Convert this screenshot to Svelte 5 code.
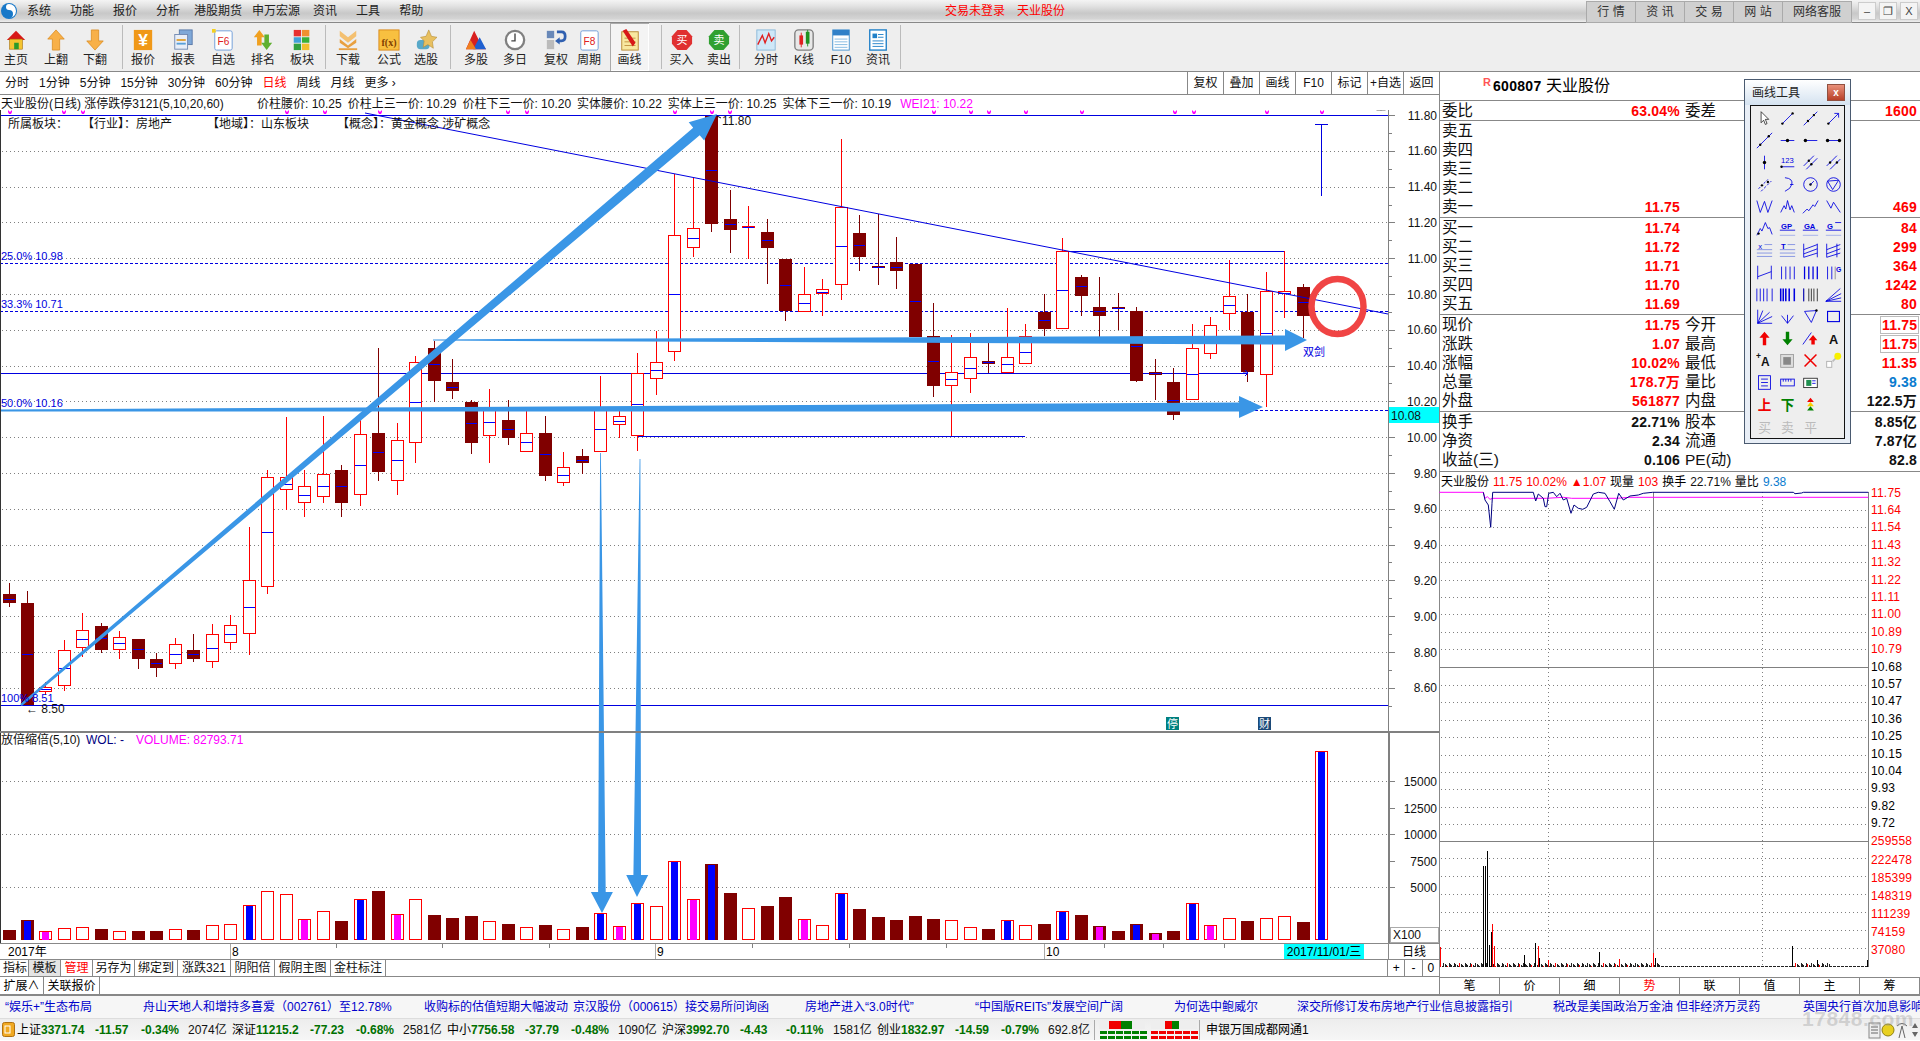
<script>
  // page coordinates are used directly inside the main chart svg (viewBox starts at 0 110)
  const H = (z) => z / 3 + 400;

  const firstCandles = [
    [1, 548, 582, 608, 620, 598], [1, 573, 609, 915, 915, 763], [0, 845, 862, 875, 885, 868], [0, 720, 751, 859, 872, 805],
    [0, 640, 691, 745, 770, 718], [1, 669, 678, 749, 758, 714], [0, 693, 712, 751, 776, 730], [1, 717, 717, 776, 806, 748],
    [1, 760, 777, 803, 830, 790], [0, 714, 733, 793, 806, 763], [1, 702, 750, 776, 785, 763], [0, 672, 703, 787, 803, 745],
    [0, 645, 676, 730, 750, 703], [0, 381, 541, 703, 764, 622], [0, 210, 232, 562, 581, 397], [0, 51, 232, 271, 331, 253],
    [0, 210, 259, 310, 351, 286], [0, 48, 223, 292, 308, 259], [1, 195, 210, 308, 350, 259], [0, 60, 103, 286, 317, 196],
    [1, -156, 99, 215, 242, 157], [0, 69, 121, 244, 284, 181], [0, -132, -115, 130, 188, 7], [1, -178, -156, -58, 6, -107],
    [1, -123, -54, -28, -3, -39], [1, 0, 6, 128, 161, 70], [0, -33, 21, 109, 188, 67], [1, 0, 60, 113, 135, 88],
    [0, 20, 100, 155, 155, 127], [1, 48, 99, 227, 243, 163], [0, 156, 202, 250, 258, 226], [1, 147, 168, 188, 222, 181],
    [0, -72, 21, 155, 155, 88], [0, 20, 49, 76, 113, 64], [0, -141, -82, 109, 152, 12], [0, -207, -115, -62, -16, -90]
  ].map(([d, ...v]) => [d, ...v.map(H)]);

  const lastCandles = [
    [0, 174, 235, 352, 361, 294], [0, 178, 228, 248, 257, 238], [1, 116, 116, 224, 232, 170], [1, 190, 219, 230, 253, 224],
    [0, 206, 226, 228, 259, 227], [1, 219, 232, 248, 284, 240], [1, 259, 259, 311, 321, 285], [0, 267, 294, 312, 312, 303],
    [0, 279, 289, 294, 316, 292], [0, 139, 207, 285, 300, 246], [1, 215, 233, 257, 271, 245], [1, 214, 266, 268, 285, 267],
    [1, 237, 262, 271, 289, 267], [1, 264, 264, 337, 337, 301], [1, 303, 336, 386, 397, 361], [0, 335, 372, 386, 436, 379],
    [0, 333, 357, 379, 393, 368], [1, 343, 361, 364, 373, 362], [0, 308, 357, 373, 373, 364], [0, 324, 336, 364, 364, 352],
    [1, 294, 312, 329, 336, 320], [0, 238, 251, 329, 329, 290], [1, 275, 277, 296, 316, 286], [1, 277, 307, 316, 340, 311],
    [1, 293, 307, 309, 330, 308], [1, 307, 311, 381, 382, 346], [1, 359, 372, 375, 400, 373], [1, 368, 382, 415, 420, 400],
    [0, 324, 348, 400, 400, 374], [0, 317, 325, 354, 359, 340], [0, 260, 296, 314, 330, 305], [1, 294, 312, 372, 382, 341],
    [0, 272, 291, 375, 407, 333], [0, 251, 291, 294, 318, 293], [1, 284, 287, 316, 338, 302]
  ];

  const cx = (i) => Math.round(8.5 + 18.49 * i);
  const candles = [...firstCandles, ...lastCandles].map(([down, hi, top, bot, lo, mid], i) => ({
    x: cx(i), down, hi: Math.round(hi), top: Math.round(top), bot: Math.round(bot), lo: Math.round(lo), mid: Math.round(mid)
  }));

  const volumes = [
    [630,'d'],[600,'d','b'],[634,'u','m'],[625,'u'],[622,'u'],[627,'d'],[634,'u'],[633,'d'],[633,'d'],[628,'u'],[630,'d'],[616,'u'],
    [613,'u'],[556,'u','b'],[514,'u'],[523,'u'],[598,'u','m'],[574,'u'],[603,'d'],[538,'u','b'],[513,'d'],[583,'u','m'],[538,'u'],[585,'d'],
    [594,'d'],[588,'d'],[604,'u'],[612,'d'],[622,'u'],[615,'d'],[628,'u'],[621,'d'],[580,'u','b'],[619,'u','m'],[550,'u','b'],[559,'u'],
    [424,'u','b'],[538,'u','m'],[432,'d','b'],[519,'d'],[565,'u'],[558,'d'],[531,'d'],[598,'u','m'],[616,'u'],[520,'u','b'],[567,'d'],[591,'d'],
    [600,'d'],[588,'d'],[597,'d'],[601,'u'],[622,'u'],[627,'d'],[601,'u','b'],[616,'u'],[612,'d'],[574,'u','b'],[585,'d'],[618,'d','m'],
    [633,'d'],[612,'d','b'],[639,'d','m'],[633,'d'],[550,'u','b'],[616,'u','m'],[595,'u'],[603,'d'],[595,'u'],[589,'u'],[606,'d'],[94,'u','b']
  ].map(([z, kind, over], i) => ({ x: cx(i), top: Math.round(z / 3 + 720), kind, over }));

  const priceLabels = Array.from({ length: 17 }, (_, i) => ({ y: 115 + i * 35.8, text: (11.8 - i * 0.2).toFixed(2) }));
  const priceGrid = priceLabels.map((l) => Math.round(l.y)).filter((y) => y !== 115);
  const volLabels = [[781, '15000'], [808, '12500'], [834, '10000'], [861, '7500'], [887, '5000']];
  const markers = [10, 64, 83, 287, 325, 380, 508, 527, 675, 712, 730, 934, 971, 989, 1026, 1082, 1175, 1194, 1267, 1322];

  function arrow(x0, y0, x1, y1, w0, w1, headLen, headHalf) {
    const len = Math.hypot(x1 - x0, y1 - y0);
    const ux = (x1 - x0) / len, uy = (y1 - y0) / len;
    const px = -uy, py = ux;
    const bx = x1 - ux * headLen, by = y1 - uy * headLen;
    const pts = [
      [x0 + px * w0, y0 + py * w0], [bx + px * w1, by + py * w1], [bx + px * headHalf, by + py * headHalf], [x1, y1],
      [bx - px * headHalf, by - py * headHalf], [bx - px * w1, by - py * w1], [x0 - px * w0, y0 - py * w0]
    ];
    return pts.map((p) => p[0].toFixed(1) + ',' + p[1].toFixed(1)).join(' ');
  }
  const arrows = [
    arrow(21, 705, 717, 114, 1.2, 5, 27, 12),
    arrow(433, 340, 1307, 340, 0.6, 4.5, 22, 11),
    arrow(0, 410.5, 1263, 407, 1, 4.5, 24, 11),
    arrow(600.5, 453, 602, 913, 0.4, 3.8, 21, 11),
    arrow(640, 459, 637, 897, 0.4, 3.8, 22, 11)
  ];

  const toolbar = [
    { w: 32, label: '主页', icon: '<path d="M12 2 22 12H2z" fill="#d81818"/><rect x="5" y="11" width="14" height="11" fill="#f4c430" stroke="#a06800" stroke-width=".6"/><rect x="10" y="15" width="5" height="7" fill="#2a9a2a"/>' },
    { w: 48, label: '上翻', icon: '<path d="M12 1 21 11H16V23H8V11H3z" fill="#f8b048" stroke="#d88818" stroke-width=".8"/>' },
    { w: 30, label: '下翻', icon: '<path d="M12 23 21 13H16V1H8V13H3z" fill="#f8b048" stroke="#d88818" stroke-width=".8"/>' },
    { sep: 12 },
    { w: 36, label: '报价', icon: '<rect x="2" y="1" width="20" height="22" fill="#f09818"/><text x="12" y="19" text-anchor="middle" font-size="19" font-weight="700" fill="#fff" font-family="Liberation Sans">¥</text>' },
    { w: 44, label: '报表', icon: '<rect x="8" y="1" width="14" height="16" fill="#7fa8d8" stroke="#5878a8"/><rect x="3" y="6" width="14" height="16" fill="#e8eef8" stroke="#7088b0"/><rect x="5" y="11" width="10" height="2" fill="#e0a030"/><rect x="5" y="15" width="10" height="2" fill="#58a0d8"/>' },
    { w: 36, label: '自选', icon: '<rect x="3" y="2" width="19" height="21" rx="2" fill="#fff" stroke="#6b9ad8"/><rect x="0" y="0" width="4" height="4" fill="#f4d020"/><text x="12.5" y="17" text-anchor="middle" font-size="11" fill="#e02020" font-family="Liberation Sans">F6</text>' },
    { w: 44, label: '排名', icon: '<path d="M8 1 14 9H10.5V18H5.5V9H2z" fill="#f0a020"/><path d="M16 23 22 15H18.5V6H13.500V15H10z" fill="#60b030"/>' },
    { w: 34, label: '板块', icon: '<rect x="3" y="1" width="8" height="7" fill="#e83030"/><rect x="12" y="1" width="8" height="7" fill="#f09030"/><rect x="3" y="9" width="8" height="6" fill="#40a0d8"/><rect x="12" y="9" width="8" height="6" fill="#38b038"/><rect x="3" y="16" width="8" height="7" fill="#30a040"/><rect x="12" y="16" width="8" height="7" fill="#f0c030"/>' },
    { sep: 6 },
    { w: 40, label: '下载', icon: '<path d="M3 2 12 9 21 2V8L12 15 3 8z" fill="#f4c070"/><path d="M3 11 12 18 21 11V15L12 21 3 15z" fill="#e8a040"/><rect x="2" y="21" width="20" height="2" fill="#e8a040"/>' },
    { w: 42, label: '公式', icon: '<rect x="1" y="1" width="22" height="22" fill="#f8c040" stroke="#d88818"/><text x="12" y="18" text-anchor="middle" font-size="11" font-weight="700" fill="#804000" font-family="Liberation Serif">f(x)</text>' },
    { w: 32, label: '选股', icon: '<rect x="2" y="12" width="14" height="10" rx="4" fill="#58a8c8"/><path d="M15 1 18 8 24 9 19 14 20 21 14 17 9 20 10 13 6 9 12 8z" fill="#e8c060" stroke="#b08830" stroke-width=".6"/>' },
    { sep: 8 },
    { w: 46, label: '多股', icon: '<path d="M1 22 10 2 16 14 23 22z" fill="#d82020"/><path d="M9 22 16 9 23 22z" fill="#2060d0"/><path d="M1 22 6 12 12 22z" fill="#f08020"/>' },
    { w: 32, label: '多日', icon: '<circle cx="12" cy="12" r="10" fill="#fff" stroke="#808080" stroke-width="2.500"/><path d="M12 5V13H8" fill="none" stroke="#444" stroke-width="1.500"/>' },
    { w: 50, label: '复权', icon: '<rect x="2" y="2" width="8" height="8" fill="#6888b8"/><rect x="2" y="12" width="8" height="10" fill="#bbb"/><path d="M13 3H18Q22 3 22 8T18 13H15" fill="none" stroke="#3060b0" stroke-width="3"/><path d="M16 9 11 13 16 17z" fill="#3060b0"/>' },
    { w: 16, label: '周期', icon: '<rect x="3" y="2" width="19" height="21" rx="2" fill="#fff" stroke="#6b9ad8"/><text x="12.5" y="17" text-anchor="middle" font-size="11" fill="#e02020" font-family="Liberation Sans">F8</text>' },
    { space: 13 },
    { w: 39, label: '画线', active: true, icon: '<rect x="3" y="3" width="18" height="20" fill="#f8e8a0" stroke="#b88830"/><path d="M6 10H18M6 14H18M6 18H18" stroke="#c09040"/><path d="M4 2 8 0 18 15 15 19z" fill="#d81818"/>' },
    { sep: 12 },
    { w: 35, label: '买入', icon: '<path d="M7 1H17L23 8V16L17 23H7L1 16V8z" fill="#e03030"/><text x="12" y="16.500" text-anchor="middle" font-size="12" fill="#fff" font-family="Noto Sans CJK SC">买</text>' },
    { w: 40, label: '卖出', icon: '<path d="M7 1H17L23 8V16L17 23H7L1 16V8z" fill="#30a030"/><text x="12" y="16.500" text-anchor="middle" font-size="12" fill="#fff" font-family="Noto Sans CJK SC">卖</text>' },
    { sep: 0 },
    { w: 48, label: '分时', icon: '<rect x="2" y="1" width="20" height="22" fill="#cfe8f8" stroke="#88b8d8"/><path d="M3 17 8 7 11 15 15 5 18 13 21 9" fill="none" stroke="#e02020" stroke-width="1.500"/>' },
    { w: 28, label: 'K线', icon: '<rect x="2" y="1" width="20" height="22" rx="4" fill="#e8e8e8" stroke="#808080" stroke-width="1.500"/><rect x="7" y="7" width="4" height="10" fill="#e02020"/><path d="M9 4V20" stroke="#e02020"/><rect x="14" y="3" width="4" height="13" fill="#209020"/><path d="M16 1V19" stroke="#209020"/>' },
    { w: 46, label: 'F10', icon: '<rect x="3" y="1" width="18" height="22" fill="#fff" stroke="#4090d0"/><rect x="3" y="1" width="18" height="6" fill="#3080c8"/><path d="M5 11H19M5 14H19M5 17H19M5 20H19" stroke="#80b8e0"/>' },
    { w: 28, label: '资讯', icon: '<rect x="3" y="1" width="18" height="22" fill="#fff" stroke="#2080c8" stroke-width="1.500"/><rect x="6" y="5" width="5" height="5" fill="#2080c8"/><path d="M12 6H18M12 9H18M6 13H18M6 16H18M6 19H18" stroke="#2080c8"/>' },
    { sep: 8 }
  ];

  const menu = [['系统', 27], ['功能', 19], ['报价', 19], ['分析', 19], ['港股期货', 14], ['申万宏源', 10], ['资讯', 13], ['工具', 19], ['帮助', 19]];
  const periods = ['分时', '1分钟', '5分钟', '15分钟', '30分钟', '60分钟', '日线', '周线', '月线', '更多 ›'];
  const chartBtns = ['复权', '叠加', '画线', 'F10', '标记', '+自选', '返回'];
  const infoItems = ['价柱腰价: 10.25', '价柱上三一价: 10.29', '价柱下三一价: 10.20', '实体腰价: 10.22', '实体上三一价: 10.25', '实体下三一价: 10.19'];
  const bottomTabs = [['指标', 27], ['模板', 32], ['管理', 32], ['另存为', 42], ['绑定到', 43], ['涨跌321', 53], ['阴阳倍', 44], ['假阴主图', 56], ['金柱标注', 55]];
  const minorTicks = [336, 442, 549, 752, 849, 946, 1104, 1163, 1224];

  const sellRows = [['卖五'], ['卖四'], ['卖三'], ['卖二'], ['卖一', '11.75', '469']];
  const buyRows = [['买一', '11.74', '84'], ['买二', '11.72', '299'], ['买三', '11.71', '364'], ['买四', '11.70', '1242'], ['买五', '11.69', '80']];
  const statRows = [
    ['现价', '11.75', '今开', '11.75', 'boxed'], ['涨跌', '1.07', '最高', '11.75', 'boxed'], ['涨幅', '10.02%', '最低', '11.35', ''],
    ['总量', '178.7万', '量比', '9.38', 'blue'], ['外盘', '561877', '内盘', '122.5万', 'black']
  ];
  const fundRows = [['换手', '22.71%', '股本', '8.85亿'], ['净资', '2.34', '流通', '7.87亿'], ['收益(三)', '0.106', 'PE(动)', '82.8']];

  // intraday panel, points read at 3x of the crop starting at 1430,470
  const ix = (z) => z / 3 + 1430;
  const iy = (z) => z / 3 + 470;
  const pts = (list) => list.map(([x, y]) => ix(x).toFixed(1) + ',' + iy(y).toFixed(1)).join(' ');
  const navy = pts([[160,67],[165,90],[175,105],[182,172],[186,100],[188,67],[310,67],[317,93],[325,72],[340,85],[345,110],[350,110],[356,70],[370,67],[380,80],[390,70],[400,90],[410,85],[423,130],[432,105],[445,115],[458,118],[470,112],[490,72],[505,67],[525,70],[540,95],[553,118],[566,70],[580,90],[600,78],[625,75],[640,70],[668,67],[1090,67],[1095,71],[1115,69],[1120,67],[1315,67]]);
  const pink = pts([[28,67],[160,67],[165,85],[172,80],[180,88],[188,85],[300,85],[350,85],[400,82],[425,85],[520,85],[560,85],[600,82],[1315,82]]);
  const minuteLabels = [[67,'11.75',1],[118,'11.64',1],[170,'11.54',1],[224,'11.43',1],[275,'11.32',1],[329,'11.22',1],[380,'11.11',1],[431,'11.00',1],[485,'10.89',1],[536,'10.79',1],[590,'10.68',0],[640,'10.57',0],[691,'10.47',0],[745,'10.36',0],[796,'10.25',0],[850,'10.15',0],[901,'10.04',0],[952,'9.93',0],[1006,'9.82',0],[1057,'9.72',0],[1111,'259558',1],[1168,'222478',1],[1222,'185399',1],[1276,'148319',1],[1330,'111239',1],[1384,'74159',1],[1438,'37080',1]];
  const minuteDots = [121,172,226,277,331,382,433,487,538,644,695,749,800,854,905,956,1010,1061,1165,1219,1273,1327,1381,1435];
  const minuteTall = [[31,1431,1],[160,1188,0],[166,1188,0],[172,1143,0],[178,1425,0],[182,1385,0],[187,1362,1],[193,1428,1],[283,1455,0],[316,1419,0],[323,1428,1],[328,1465,0],[355,1470,1],[508,1446,0],[568,1468,1],[670,1450,1],[676,1465,0],[1087,1428,0],[1160,1470,0],[1310,1470,0]];
  const minuteNoise = Array.from({ length: 320 }, (_, i) => {
    const x = 36 + i * 4;
    const busy = x < 690 || (x > 1090 && x < 1200);
    const h = busy ? 1 + ((i * 7) % 4) : 1;
    return { x: ix(x), h, red: busy && i % 9 === 4 };
  });
  const minuteTabs = ['笔', '价', '细', '势', '联', '值', '主', '筹'];

  const news = [
    ['“娱乐+”生态布局', 138], ['舟山天地人和增持多喜爱（002761）至12.78%', 281], ['收购标的估值短期大幅波动', 149], ['京汉股份（000615）接交易所问询函', 232],
    ['房地产进入“3.0时代”', 170], ['“中国版REITs”发展空间广阔', 199], ['为何选中鲍威尔', 123], ['深交所修订发布房地产行业信息披露指引', 256], ['税改是美国政治万金油 但非经济万灵药', 250], ['英国央行首次加息影响', 117]
  ];
  const indexes = [
    ['上证', '3371.74', '-11.57', '-0.34%', '2074亿'], ['深证', '11215.2', '-77.23', '-0.68%', '2581亿'], ['中小', '7756.58', '-37.79', '-0.48%', '1090亿'],
    ['沪深', '3992.70', '-4.43', '-0.11%', '1581亿'], ['创业', '1832.97', '-14.59', '-0.79%', '692.8亿']
  ];

  const b = 'stroke="#0000e0" fill="none"';
  const d = '<circle cx="{x}" cy="{y}" r="1.400" fill="#000"/>';
  const dot = (x, y) => d.replace('{x}', x).replace('{y}', y);
  const t = (s, x, y, c = '#0000e0', fs = 9, w = 400) => `<text x="${x}" y="${y}" text-anchor="middle" font-size="${fs}" font-weight="${w}" fill="${c}" font-family="Liberation Sans, Noto Sans CJK SC, sans-serif">${s}</text>`;
  const palette = [
    '<path d="M6 2V15L9 12 11 17 13 16 11 11H15z" fill="#fff" stroke="#000" stroke-width=".8"/>',
    `<path d="M4 16 16 4" ${b}/>` + dot(4, 16) + dot(16, 4),
    `<path d="M2 18 18 2" ${b}/>` + dot(7, 13) + dot(14, 6),
    `<path d="M4 16 16 4M11 4H16V9" ${b}/>` + dot(4, 16),
    `<path d="M1 19 19 1" ${b}/>` + dot(5, 15) + dot(15, 5),
    `<path d="M2 10H18" ${b}/>` + dot(10, 10).replace('1.400', '2'),
    `<path d="M4 10H18" ${b}/>` + dot(4, 10).replace('1.400', '2'),
    `<path d="M3 10H17" ${b}/>` + dot(3, 10).replace('1.400', '2') + dot(17, 10).replace('1.400', '2'),
    `<path d="M10 2V18" ${b}/>` + dot(10, 10).replace('1.400', '2'),
    t('123', 10, 10) + `<path d="M2 15H18" ${b}/>` + dot(3, 15),
    `<path d="M2 14 14 2M5 18 18 5" ${b}/>` + dot(8, 8) + dot(11, 12),
    `<path d="M2 14 14 2M6 18 18 6" ${b}/>` + dot(6, 10) + dot(14, 10),
    `<path d="M3 15 7 11M9 9 14 4M6 18 18 6" ${b} stroke-dasharray="3 2"/>` + dot(7, 11) + dot(14, 7),
    `<path d="M7 2Q17 3 15 10 14 15 7 18M13 10H17" ${b}/>`,
    `<circle cx="10" cy="10" r="8" ${b}/>` + dot(10, 10) + `<path d="M10 10 14 6" ${b}/>`,
    `<circle cx="10" cy="10" r="8" ${b}/><path d="M3 6 16 5 9 16z" ${b}/>`,
    `<path d="M1 3 5 17 10 4 14 17 19 3" ${b}/>`,
    `<path d="M2 17 6 9 8 13 10 3 13 14 15 9 18 17" ${b}/>`,
    `<path d="M1 18 6 13 8 15 13 8 15 10 19 3" ${b}/>`,
    `<path d="M2 3 7 12 10 5 18 17" ${b}/>`,
    `<path d="M1 18 5 10 7 13 11 3 14 10 16 9 19 17" ${b}/>` + dot(3, 16),
    t('GP', 9, 10, '#0000e0', 9, 700) + `<path d="M1 12H19" stroke="#0000e0"/><path d="M1 18H19" stroke="#9aa8e8"/>`,
    t('GA', 9, 10, '#0000e0', 9, 700) + `<path d="M1 12H19" stroke="#0000e0"/><path d="M1 18H19" stroke="#9aa8e8"/>`,
    t('G', 6, 10, '#0000e0', 9, 700) + `<path d="M1 12H19M12 3H19" stroke="#0000e0"/><path d="M1 18H19" stroke="#9aa8e8"/>`,
    t('x', 5, 8) + `<path d="M10 3H19M1 9H19M1 13H19M1 17H19" stroke="#7a8ae0"/>`,
    t('T', 5, 8, '#0000e0', 9, 700) + `<path d="M10 3H19M1 9H19M1 13H19M1 17H19" stroke="#7a8ae0"/>`,
    `<path d="M2 2V18M18 2V18M2 9 18 3M2 14 18 8M2 18 18 13" stroke="#0000e0" fill="none"/>`,
    `<path d="M2 2V18M14 2V18M2 9 18 3M2 14 18 8M2 18 18 13" stroke="#0000e0" fill="none"/>`,
    `<path d="M2 2V18M18 2V18M2 15 18 9" ${b}/>`,
    `<path d="M3 3V18M8 3V18M13 3V18M18 3V18" ${b}/>`,
    `<path d="M3 3V18M8 3V18M13 3V18M18 3V18" stroke="#0000e0" stroke-width="1.500"/>`,
    `<path d="M3 3V18M8 3V18" ${b}/><path d="M12 3V18" stroke="#888"/>` + t('G', 16, 9, '#0000e0', 8, 700),
    `<path d="M1 3V18M5 3V18M9 3V18M13 3V18M19 3V18" ${b}/>`,
    `<path d="M2 3V18M5 3V18M8 3V18M12 3V18M18 3V18" stroke="#0000e0" stroke-width="1.800"/>`,
    `<path d="M2 3V18M8 3V18M11 3V18M14 3V18M18 3V18" stroke="#222"/><path d="M2 3V18" stroke="#0000e0"/>`,
    `<path d="M1 18 18 3M1 18 19 9M1 18 19 14M1 18H19" ${b}/>`,
    `<path d="M2 2V18H19M2 18 16 5M2 18 19 10M2 18 8 3" ${b}/>`,
    `<path d="M10 18V8M3 9 10 18 17 9" ${b}/>`,
    `<path d="M3 4 17 3 11 17z" ${b}/>` + dot(17, 3),
    `<rect x="3" y="4" width="14" height="12" ${b} stroke-width="1.300"/>`,
    '<path d="M10 2 16 9H12V18H8V9H4z" fill="#f00000"/>',
    '<path d="M10 18 16 11H12V2H8V11H4z" fill="#008000"/>',
    `<path d="M1 17 11 3" stroke="#0000e0"/><path d="M13 6 18 12H15V17H11V12H8z" fill="#f00000"/>`,
    t('A', 10, 16, '#111', 15, 700),
    t('A', 11, 17, '#111', 14, 700) + t('+', 3, 8, '#111', 10, 700),
    '<rect x="2" y="3" width="15" height="15" fill="#ddd" stroke="#999"/><rect x="5" y="6" width="9" height="9" fill="#888"/>',
    '<path d="M3 3 17 17M17 3 3 17" stroke="#f00000" stroke-width="1.800"/>',
    '<rect x="2" y="11" width="6" height="7" fill="#fff" stroke="#aaa"/><path d="M9 11 13 7" stroke="#bbb" stroke-width="2"/><circle cx="15" cy="5" r="4" fill="#f8f000"/>',
    `<rect x="3" y="2" width="14" height="16" ${b}/><path d="M6 6H14M6 10H14M6 14H14" stroke="#0000e0"/>`,
    `<rect x="2" y="6" width="16" height="8" ${b}/><path d="M5 6V9M8 6V9M11 6V9M14 6V9" stroke="#0000e0"/>`,
    '<rect x="2" y="5" width="16" height="11" fill="#fff" stroke="#222"/><rect x="5" y="7" width="6" height="7" fill="#209050"/><path d="M12 8H16M12 11H16" stroke="#0000e0"/>',
    '',
    t('上', 10, 17, '#f00000', 16, 700),
    t('下', 10, 17, '#008000', 16, 700),
    '<path d="M10 2 14 7H6z" fill="#f00000"/><path d="M10 7 14 12H6z" fill="#f8d000"/><path d="M10 12 14 17H6z" fill="#008000"/>',
    '',
    t('买', 10, 16, '#bbb', 15),
    t('卖', 10, 16, '#bbb', 15),
    t('平', 10, 16, '#bbb', 15),
    ''
  ];
</script>

<div class="app">
  <header class="titlebar">
    <svg class="logo" width="18" height="20" viewBox="0 0 18 20">
      <circle cx="9" cy="10" r="8" fill="#1878c8" />
      <path d="M9 3 A7 7 0 0 1 9 17 A4 4 0 0 0 9 9 A3 3 0 0 1 9 3" fill="#fff" />
    </svg>
    <nav class="menu">
      {#each menu as [name, gap]}
        <span style="margin-left:{gap}px" class="menu-item">{name}</span>
      {/each}
    </nav>
    <div class="login"><span>交易未登录</span><span>天业股份</span></div>
    <div class="topbtns">
      <span>行 情</span><span>资 讯</span><span>交 易</span><span>网 站</span><span class="wide">网络客服</span>
    </div>
    <div class="winbtns">
      <span>–</span>
      <span>❐</span>
      <span>X</span>
    </div>
  </header>

  <div class="toolbar">
    {#each toolbar as item}
      {#if item.sep !== undefined}
        <i class="sep" style="margin-left:{item.sep}px"></i>
      {:else if item.space}
        <i class="space" style="width:{item.space}px"></i>
      {:else}
        <div class="tool" class:active={item.active} style="width:{item.w}px">
          <svg width="22" height="22" viewBox="0 0 24 24">{@html item.icon}</svg>
          <span>{item.label}</span>
        </div>
      {/if}
    {/each}
  </div>

  <main class="main">
    <section class="left">
      <div class="periods">
        {#each periods as p}
          <span class:on={p === '日线'}>{p}</span>
        {/each}
        <div class="chartbtns">
          {#each chartBtns as c}<span>{c}</span>{/each}
        </div>
      </div>

      <div class="info">
        <span class="info-name">天业股份(日线) 涨停跌停3121(5,10,20,60)</span>
        {#each infoItems as it}<span>{it}</span>{/each}
        <span class="wei">WEI21: 10.22</span>
      </div>

      <svg class="chart" width="1440" height="833" viewBox="0 110 1440 833">
        <!-- grid -->
        <g stroke="#808080" stroke-dasharray="1 3">
          {#each priceGrid as y}<line x1="2" x2="1388" y1={y + 0.5} y2={y + 0.5} />{/each}
          {#each [781, 834, 887] as y}<line x1="2" x2="1388" y1={y + 0.5} y2={y + 0.5} />{/each}
        </g>

        <!-- fib and drawn lines under the candles -->
        <g stroke="#0000e0" shape-rendering="crispEdges">
          <line x1="0" x2="1388" y1="115.500" y2="115.500" />
          <line x1="0" x2="1388" y1="705.500" y2="705.500" />
          <line x1="0" x2="1388" y1="263.500" y2="263.500" stroke-dasharray="3 2" />
          <line x1="0" x2="1388" y1="311.500" y2="311.500" stroke-dasharray="3 2" />
          <line x1="0" x2="1388" y1="410.500" y2="410.500" stroke-dasharray="3 2" />
          <line x1="0" x2="1247" y1="373.500" y2="373.500" />
          <line x1="637" x2="1025" y1="436.500" y2="436.500" />
          <line x1="1060" x2="1284" y1="251.500" y2="251.500" />
        </g>

        <!-- candles -->
        <g shape-rendering="crispEdges">
          {#each candles as c}
            <rect x={c.x} y={c.hi} width="1" height={Math.max(c.lo - c.hi, 1)} fill={c.down ? '#800000' : '#ff0000'} />
            {#if c.down}
              <rect x={c.x - 6} y={c.top} width="13" height={Math.max(c.bot - c.top, 1)} fill="#800000" />
            {:else}
              <rect x={c.x - 5.5} y={c.top + 0.5} width="12" height={Math.max(c.bot - c.top - 1, 1)} fill="#fff" stroke="#ff0000" />
            {/if}
            <rect x={c.x - 5} y={c.mid} width="11" height="1" fill="#0000ff" />
          {/each}
          <rect x="1321" y="124" width="1" height="72" fill="#0000e0" />
          <rect x="1315" y="124" width="13" height="1" fill="#0000e0" />
        </g>

        <line x1="365" y1="113" x2="1388" y2="314" stroke="#0000e0" />
        <path d="M1243 373 1248 373M1245 370 1248 373 1245 376" fill="none" stroke="#0000e0" />

        <g fill="#ff00ff">
          {#each markers as m}
            <path d="M{m - 2} 110 L{m} 112 L{m + 2} 110 L{m + 2} 112 L{m + 1} 114 L{m - 1} 114 L{m - 2} 112z" />
          {/each}
        </g>

        <!-- volume -->
        <g shape-rendering="crispEdges">
          {#each volumes as v}
            {#if v.kind === 'd'}
              <rect x={v.x - 6} y={v.top} width="13" height={940 - v.top} fill="#800000" />
            {:else}
              <rect x={v.x - 5.5} y={v.top + 0.5} width="12" height={940 - v.top - 1} fill="#fff" stroke="#ff0000" />
            {/if}
            {#if v.over}
              <rect x={v.x - 3} y={v.top + 1} width="7" height={939 - v.top} fill={v.over === 'b' ? '#0000ff' : '#ff00ff'} />
            {/if}
          {/each}
        </g>

        <text class="lbl" x="1" y="744">放倍缩倍(5,10)</text>
        <text class="lbl navy" x="86" y="744">WOL: -</text>
        <text class="lbl pinktxt" x="136" y="744">VOLUME: 82793.71</text>

        <!-- hand drawn arrows -->
        {#each arrows as a}<polygon points={a} fill="#3a96e6" />{/each}
        <ellipse cx="1337.500" cy="306.500" rx="26" ry="27.500" fill="none" stroke="#f04444" stroke-width="6.500" />

        <!-- labels -->
        <g class="blue-label">
          <text x="1" y="260">25.0% 10.98</text>
          <text x="1" y="308">33.3% 10.71</text>
          <text x="1" y="407">50.0% 10.16</text>
          <text x="1" y="702">100% 8.51</text>
          <text x="1303" y="356">双剑</text>
        </g>
        <text class="lbl" x="8" y="128">所属板块：</text>
        <text class="lbl" x="82" y="128">【行业】：房地产</text>
        <text class="lbl" x="207" y="128">【地域】：山东板块</text>
        <text class="lbl" x="337" y="128">【概念】：黄金概念 涉矿概念</text>
        <text class="lbl" x="722" y="125">11.80</text>
        <text class="lbl" x="26" y="713">← 8.50</text>
        <path d="M717 116 721 118" stroke="#000" />

        <rect x="1166" y="717" width="13" height="13" fill="#008080" />
        <text class="badge" x="1172.500" y="728">停</text>
        <rect x="1258" y="717" width="13" height="13" fill="#1c4a78" />
        <text class="badge" x="1264.500" y="728">财</text>

        <path d="M1366 100 1371 105 1366 110 1361 105z" fill="none" stroke="#666" />
        <rect x="1377" y="100" width="4" height="10" fill="none" stroke="#666" />
        <rect x="1381" y="100" width="4" height="10" fill="none" stroke="#666" />

        <!-- axis -->
        <rect x="1388" y="110" width="1" height="621" fill="#808080" />
        <rect x="0" y="110" width="1" height="833" fill="#333" />
        <rect x="0" y="731" width="1440" height="2" fill="#808080" />
        <rect x="1388" y="733" width="2" height="210" fill="#808080" />
        <g fill="#808080" shape-rendering="crispEdges">
          {#each priceLabels as l}
            <rect x="1389" y={Math.round(l.y)} width="6" height="1" />
            <rect x="1389" y={Math.round(l.y + 17.9)} width="3" height="1" />
          {/each}
          {#each volLabels as [y]}<rect x="1390" y={y} width="5" height="1" />{/each}
        </g>
        <g class="axis">
          {#each priceLabels as l}<text x="1437" y={l.y + 4.500}>{l.text}</text>{/each}
          {#each volLabels as [y, s]}<text x="1437" y={y + 4.500}>{s}</text>{/each}
        </g>
        <rect x="1389" y="407" width="50" height="16" fill="#00ffff" />
        <text class="cyan" x="1391" y="420">10.08</text>
        <rect x="1390.500" y="927.500" width="48" height="15" fill="#fff" stroke="#aaa" />
        <text class="axis-plain" x="1393" y="939">X100</text>
      </svg>

      <div class="daterow">
        <svg class="ticks" width="1388" height="4">
          {#each minorTicks as x}<rect x={x} y="0" width="1" height="4" fill="#808080" />{/each}
        </svg>
        <span class="d0">2017年</span>
        <span class="d1">8</span>
        <span class="d2">9</span>
        <span class="d3">10</span>
        <span class="curdate">2017/11/01/三</span>
        <span class="dayline">日线</span>
      </div>

      <div class="tabrow">
        {#each bottomTabs as [name, w]}
          <span style="width:{w}px" class:grey={name === '模板'} class:red={name === '管理'}>{name}</span>
        {/each}
        <div class="zoombtns"><span>+</span><span>-</span><span>0</span></div>
      </div>

      <div class="extrow">
        <span class="e1">扩展∧</span><span class="e2">关联报价</span>
      </div>
    </section>

    <aside class="right">
      <div class="stockhead"><sup>R</sup><b>600807</b> 天业股份</div>
      <div class="rows one">
        <div class="row"><span class="k">委比</span><span class="v">63.04%</span><span class="k2">委差</span><span class="v2">1600</span></div>
      </div>
      <div class="rows five">
        {#each sellRows as [k, v, n]}
          <div class="row"><span class="k">{k}</span><span class="v">{v ?? ''}</span><span class="k2"></span><span class="v2">{n ?? ''}</span></div>
        {/each}
      </div>
      <div class="rows five">
        {#each buyRows as [k, v, n]}
          <div class="row"><span class="k">{k}</span><span class="v">{v}</span><span class="k2"></span><span class="v2">{n}</span></div>
        {/each}
      </div>
      <div class="rows five">
        {#each statRows as [k, v, k2, v2, cls]}
          <div class="row"><span class="k">{k}</span><span class="v">{v}</span><span class="k2">{k2}</span><span class="v2 {cls}">{v2}</span></div>
        {/each}
      </div>
      <div class="rows three">
        {#each fundRows as [k, v, k2, v2]}
          <div class="row"><span class="k">{k}</span><span class="v ink">{v}</span><span class="k2">{k2}</span><span class="v2 black">{v2}</span></div>
        {/each}
      </div>

      <div class="minutehead">
        <span>天业股份</span><em>11.75</em><em>10.02%</em><em>▲1.07</em><span>现量</span><em>103</em><span>换手</span><span class="num">22.71%</span><span>量比</span><span class="num-blue">9.38</span>
      </div>
      <svg class="minute" width="479" height="475" viewBox="1440 492 479 475">
        <g stroke="#808080" stroke-dasharray="1 3">
          {#each minuteDots as y}<line x1="1441" x2="1868" y1={Math.round(iy(y)) + 0.5} y2={Math.round(iy(y)) + 0.5} />{/each}
          <line x1="1548.500" x2="1548.500" y1="492" y2="967" />
          <line x1="1762.500" x2="1762.500" y1="492" y2="967" />
        </g>
        <g fill="#808080" shape-rendering="crispEdges">
          <rect x="1440" y="667" width="428" height="1" />
          <rect x="1440" y="841" width="428" height="1" />
          <rect x="1653" y="492" width="1" height="475" />
          <rect x="1868" y="492" width="1" height="475" />
        </g>
        {#each minuteNoise as n}
          <rect x={n.x} y={967 - n.h} width="1" height={n.h} fill={n.red ? '#ff0000' : '#222'} shape-rendering="crispEdges" />
        {/each}
        {#each minuteTall as [x, y, red]}
          <rect x={Math.round(ix(x))} y={iy(y)} width="1" height={967 - iy(y)} fill={red ? '#ff0000' : '#000'} shape-rendering="crispEdges" />
        {/each}
        <polyline points={pink} fill="none" stroke="#ff00ff" />
        <polyline points={navy} fill="none" stroke="#000080" />
        <g class="minute-axis">
          {#each minuteLabels as [y, s, red]}
            <text x="1871" y={iy(y) + 4.500} fill={red ? '#ff0000' : '#000'}>{s}</text>
          {/each}
        </g>
      </svg>
      <div class="minutetabs">
        {#each minuteTabs as m}<span class:red={m === '势'}>{m}</span>{/each}
      </div>

      <div class="palette">
        <div class="palette-title"><span>画线工具</span><b>x</b></div>
        <div class="palette-grid">
          {#each palette as p}
            <svg width="17" height="17" viewBox="0 0 20 20">{@html p}</svg>
          {/each}
        </div>
      </div>
    </aside>
  </main>

  <div class="news">
    {#each news as [text, w]}<span style="width:{w}px">{text}</span>{/each}
  </div>

  <footer class="status">
    <svg class="coin" width="13" height="15" viewBox="0 0 13 15"><rect x=".5" y=".5" width="12" height="14" rx="2" fill="#f0a820" stroke="#b07010" /><rect x="3" y="4" width="5" height="7" fill="none" stroke="#fff" /></svg>
    {#each indexes as [name, val, chg, pct, amt]}
      <div class="idx">
        <span class="idx-name">{name}<b>{val}</b></span><b>{chg}</b><b>{pct}</b><span class="amt">{amt}</span>
      </div>
    {/each}
    <svg class="leds" width="104" height="20" viewBox="0 0 104 20" shape-rendering="crispEdges">
      <rect x="4" y="1" width="46" height="8" fill="#eee" /><rect x="14" y="1" width="12" height="8" fill="#f00000" /><rect x="26" y="1" width="11" height="8" fill="#008000" />
      <rect x="56" y="1" width="46" height="8" fill="#eee" /><rect x="70" y="1" width="7" height="8" fill="#f00000" /><rect x="77" y="1" width="7" height="8" fill="#008000" />
      {#each [0, 1, 2, 3, 4, 5] as i}
        <rect x={5 + i * 8} y="11" width="7" height="3" fill="#008000" /><rect x={5 + i * 8} y="16" width="7" height="3" fill="#008000" />
        <rect x={56 + i * 8} y="11" width="7" height="3" fill="#f00000" /><rect x={56 + i * 8} y="16" width="7" height="3" fill="#f00000" />
      {/each}
    </svg>
    <span class="broker">申银万国成都网通1</span>
    <div class="tray">
      <svg width="50" height="20" viewBox="0 0 50 20">
        <rect x="1" y="3" width="11" height="15" fill="#eee" stroke="#888" /><path d="M3 7H10M3 10H10M3 13H10" stroke="#666" />
        <circle cx="20" cy="10" r="6" fill="#e8d020" stroke="#908010" />
        <path d="M31 18 34 6 37 18M29 6Q34 1 39 6" fill="none" stroke="#666" />
        <path d="M44 8 47 3 50 8zM44 12 47 17 50 12z" fill="#666" />
      </svg>
    </div>
    <span class="mark">17848.com</span>
  </footer>
</div>

<style>
  :global(body) {
    margin: 0;
    background: #fff;
  }

  .app {
    width: 1920px;
    height: 1041px;
    overflow: hidden;
    display: flex;
    flex-direction: column;
    font: 12px/1 "Liberation Sans", "Noto Sans CJK SC", sans-serif;
    color: #000;
    position: relative;
  }

  .titlebar {
    height: 22px;
    flex: none;
    display: flex;
    align-items: center;
    border-bottom: 1px solid #888;
    background: linear-gradient(#f4f4f4, #e4e4e4 25%, #c8c8c8 60%, #d4d4d4 85%, #efefef);
    position: relative;
  }

  .logo {
    position: absolute;
    left: 0;
    top: 1px;
  }

  .menu {
    display: flex;
  }

  .menu-item {
    white-space: nowrap;
    font-size: 12px;
    color: #222;
  }

  .login {
    position: absolute;
    left: 945px;
    display: flex;
    gap: 12px;
    color: #f00;
  }

  .topbtns {
    margin-left: auto;
    display: flex;
    height: 20px;
    margin-top: 1px;
    background: #d0d0d0;
    border: 1px solid #aaa;
  }

  .topbtns span {
    width: 48px;
    border-right: 1px solid #aaa;
    display: flex;
    align-items: center;
    justify-content: center;
    color: #333;
  }

  .topbtns .wide {
    width: 68px;
    border-right: 0;
  }

  .winbtns {
    display: flex;
    gap: 3px;
    margin: 0 2px 0 6px;
  }

  .winbtns span {
    width: 18px;
    height: 18px;
    background: #f4f4f4;
    border: 1px solid #ccc;
    box-sizing: border-box;
    display: flex;
    align-items: center;
    justify-content: center;
    color: #444;
    font-size: 11px;
  }

  .toolbar {
    height: 48px;
    flex: none;
    display: flex;
    align-items: stretch;
    background: #eee;
    border-bottom: 1px solid #888;
  }

  .tool {
    display: flex;
    flex-direction: column;
    align-items: center;
    box-sizing: border-box;
    padding-top: 6px;
    gap: 2px;
    font-size: 12px;
    color: #222;
    flex: none;
    white-space: nowrap;
  }

  .tool svg {
    flex: none;
  }

  .tool span {
    line-height: 14px;
  }

  .tool.active {
    background: #f4f4f4;
    box-shadow: inset 1px 1px 0 #aaa, inset -1px -1px 0 #fff;
  }

  .sep {
    width: 1px;
    background: #bbb;
    margin: 2px 2px 2px 0;
    flex: none;
  }

  .space {
    flex: none;
  }

  .main {
    flex: none;
    height: 922px;
    display: flex;
    position: relative;
  }

  .left {
    width: 1439px;
    flex: none;
    display: flex;
    flex-direction: column;
    border-right: 1px solid #888;
    overflow: hidden;
  }

  .periods {
    height: 22px;
    flex: none;
    display: flex;
    align-items: center;
    gap: 10px;
    padding-left: 5px;
    border-bottom: 1px solid #888;
    color: #111;
  }

  .periods .on {
    color: #f00;
  }

  .chartbtns {
    margin-left: auto;
    display: flex;
    height: 100%;
    border-left: 1px solid #888;
  }

  .chartbtns span {
    width: 35px;
    display: flex;
    align-items: center;
    justify-content: center;
    border-right: 1px solid #888;
  }

  .chartbtns span:last-child {
    border-right: 0;
  }

  .info {
    height: 15px;
    flex: none;
    display: flex;
    gap: 6px;
    padding-left: 1px;
    white-space: nowrap;
    align-items: flex-end;
    color: #111;
  }

  .info-name {
    width: 250px;
  }

  .wei {
    color: #ff00ff;
    margin-left: 3px;
  }

  .chart {
    display: block;
    flex: none;
  }

  .blue-label text {
    font-size: 11px;
    fill: #0000e0;
  }

  .lbl {
    font-size: 12px;
    fill: #111;
  }

  .lbl.navy {
    fill: #000080;
  }

  .lbl.pinktxt {
    fill: #ff00ff;
  }

  .badge {
    font-size: 11px;
    fill: #fff;
    text-anchor: middle;
  }

  .axis text {
    font-size: 12px;
    text-anchor: end;
    fill: #111;
  }

  .cyan,
  .axis-plain {
    font-size: 12px;
    fill: #111;
  }

  .daterow {
    height: 16px;
    flex: none;
    display: flex;
    align-items: stretch;
    border-top: 1px solid #888;
    box-sizing: border-box;
    position: relative;
  }

  .ticks {
    position: absolute;
    left: 0;
    top: 0;
  }

  .daterow span {
    display: flex;
    align-items: center;
    box-sizing: border-box;
    padding-left: 1px;
  }

  .d0 {
    width: 230px;
    padding-left: 8px !important;
  }

  .d1 {
    width: 425px;
    border-left: 1px solid #aaa;
  }

  .d2 {
    width: 389px;
    border-left: 1px solid #aaa;
  }

  .d3 {
    width: 240px;
    border-left: 1px solid #aaa;
  }

  .curdate {
    width: 80px;
    background: #00ffff;
    justify-content: center;
    padding-left: 0 !important;
  }

  .dayline {
    margin-left: 24px;
    width: 51px;
    justify-content: center;
    border-left: 1px solid #888;
    padding-left: 0 !important;
  }

  .tabrow {
    height: 17px;
    flex: none;
    display: flex;
    border-top: 1px solid #888;
    box-sizing: border-box;
  }

  .tabrow > span {
    box-sizing: border-box;
    border-right: 1px solid #888;
    display: flex;
    align-items: center;
    justify-content: center;
    white-space: nowrap;
    color: #111;
  }

  .tabrow > span:first-child {
    margin-left: 2px;
  }

  .grey {
    background: #e4e4e4;
  }

  .red {
    color: #f00 !important;
  }

  .zoombtns {
    margin-left: auto;
    width: 51px;
    display: flex;
    border-left: 1px solid #888;
  }

  .zoombtns span {
    flex: 1;
    display: flex;
    align-items: center;
    justify-content: center;
    border-right: 1px solid #888;
  }

  .zoombtns span:last-child {
    border-right: 0;
  }

  .extrow {
    height: 18px;
    flex: none;
    display: flex;
    border-top: 1px solid #888;
    box-sizing: border-box;
  }

  .extrow span {
    display: flex;
    align-items: center;
    justify-content: center;
    border-right: 1px solid #888;
    box-sizing: border-box;
  }

  .e1 {
    width: 44px;
  }

  .e2 {
    width: 56px;
  }

  .right {
    flex: 1;
    display: flex;
    flex-direction: column;
    position: relative;
    min-width: 0;
  }

  .stockhead {
    height: 28px;
    flex: none;
    box-sizing: border-box;
    padding: 5px 0 0 43px;
    font-size: 16px;
    white-space: nowrap;
  }

  .stockhead b {
    font-size: 14px;
    letter-spacing: 0.3px;
  }

  .stockhead sup {
    color: #f55;
    font-size: 11px;
    font-weight: 700;
    margin-right: 2px;
    vertical-align: 5px;
  }

  .rows {
    flex: none;
    border-top: 1px solid #888;
    box-sizing: border-box;
  }

  .rows.one {
    height: 20px;
  }

  .rows.five {
    height: 97px;
  }

  .rows.three {
    height: 60px;
  }

  .row {
    height: 19px;
    display: grid;
    grid-template-columns: 58px 180px 70px 1fr;
    align-items: center;
    padding: 0 3px 0 2px;
    white-space: nowrap;
  }

  .k,
  .k2 {
    font-size: 15.500px;
    color: #111;
    line-height: 19px;
  }

  .k2 {
    padding-left: 5px;
  }

  .v,
  .v2 {
    font-size: 14px;
    font-weight: 700;
    color: #f00;
    text-align: right;
    letter-spacing: 0.2px;
  }

  .v2.black,
  .v.ink {
    color: #111;
  }

  .v2.blue {
    color: #0a7ccf;
  }

  .v2.boxed {
    justify-self: end;
    width: 35px;
    box-sizing: border-box;
    outline: 1px solid #bbb;
    outline-offset: 1px;
  }

  .minutehead {
    height: 21px;
    flex: none;
    box-sizing: border-box;
    border-top: 1px solid #888;
    display: flex;
    align-items: center;
    padding-left: 1px;
    gap: 4px;
    white-space: nowrap;
  }

  .minutehead em {
    font-style: normal;
    color: #f00;
  }

  .minutehead .num {
    color: #111;
  }

  .num-blue {
    color: #0a7ccf;
  }

  .minute {
    display: block;
    flex: none;
    overflow: visible;
  }

  .minute-axis text {
    font-size: 12px;
    letter-spacing: 0.2px;
  }

  .minutetabs {
    margin-top: 10px;
    height: 17px;
    flex: none;
    display: flex;
    border-top: 1px solid #888;
    box-sizing: border-box;
  }

  .minutetabs span {
    flex: 1;
    display: flex;
    align-items: center;
    justify-content: center;
    border-right: 1px solid #888;
    box-sizing: border-box;
  }

  .palette {
    position: absolute;
    left: 304px;
    top: 7px;
    width: 107px;
    height: 365px;
    box-sizing: border-box;
    background: #e8eef6;
    border: 1px solid #4a5a70;
    padding: 0 5px 5px;
  }

  .palette-title {
    height: 25px;
    display: flex;
    align-items: center;
    justify-content: space-between;
    font-size: 12px;
    color: #222;
    background: linear-gradient(#fff, #d4e2f0);
    margin: 0 -5px;
    padding: 0 5px 0 7px;
  }

  .palette-title b {
    width: 18px;
    height: 17px;
    background: linear-gradient(#e8907a, #b84028);
    border: 1px solid #905040;
    box-sizing: border-box;
    display: flex;
    align-items: center;
    justify-content: center;
    color: #fff;
    font-size: 10px;
  }

  .palette-grid {
    height: 334px;
    box-sizing: border-box;
    border: 1px solid #111;
    background: #eee;
    display: grid;
    grid-template-columns: repeat(4, 23px);
    grid-auto-rows: 22px;
    padding: 1px 0 0 1.500px;
    justify-items: center;
    align-items: center;
  }

  .news {
    height: 24px;
    flex: none;
    border-top: 2px solid #888;
    box-sizing: border-box;
    display: flex;
    align-items: center;
    padding-left: 5px;
    background: #f6f6f6;
    color: #0000cc;
    white-space: nowrap;
    overflow: hidden;
  }

  .news span {
    flex: none;
  }

  .status {
    height: 22px;
    flex: none;
    display: flex;
    align-items: center;
    background: linear-gradient(#ededed, #f6f6f6);
    border-top: 1px solid #ddd;
    box-sizing: border-box;
    position: relative;
    white-space: nowrap;
  }

  .coin {
    margin: 0 2px;
    flex: none;
  }

  .idx {
    flex: none;
    width: 215px;
    display: grid;
    grid-template-columns: 78px 46px 47px 44px;
    align-items: center;
  }

  .idx b {
    color: #007000;
    font-size: 12px;
  }

  .idx-name {
    font-size: 12px;
  }

  .amt {
    color: #111;
  }

  .leds {
    margin-left: 2px;
    border-left: 1px solid #aaa;
    border-right: 1px solid #aaa;
    flex: none;
  }

  .broker {
    margin-left: 6px;
  }

  .tray {
    margin-left: auto;
    margin-right: 2px;
    display: flex;
  }

  .mark {
    position: absolute;
    right: 6px;
    top: -11px;
    font-size: 21px;
    font-weight: 700;
    color: rgba(150, 150, 150, 0.35);
    letter-spacing: 0.500px;
  }
</style>
